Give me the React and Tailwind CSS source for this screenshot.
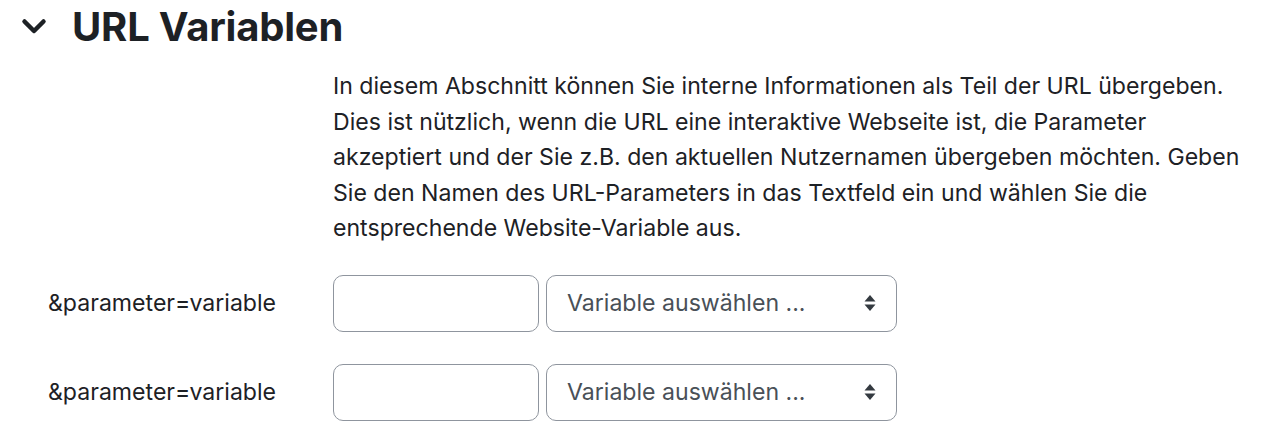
import React from 'react';

const rows = [1, 2];

const App = () => {
  return (
    <div className="min-h-screen bg-white text-[#1d2125] font-['Inter',sans-serif]">
      <div className="flex items-center h-[54px] pl-[21px]">
        <svg width="26" height="18" viewBox="0 0 26 18" className="mr-[25px]">
          <path d="M3.5 3.5 L13 13 L22.5 3.5" fill="none" stroke="#1d2125" strokeWidth="4.5" strokeLinecap="round" strokeLinejoin="round" />
        </svg>
        <h2 className="text-[40px] font-bold leading-none tracking-[-0.2px]">URL Variablen</h2>
      </div>

      <div className="pl-[333px] pt-[15px]">
        <p className="w-[925px] text-[23.1px] leading-[35.5px]">
          In diesem Abschnitt können Sie interne Informationen als Teil der URL übergeben. Dies ist nützlich, wenn die URL eine interaktive Webseite ist, die Parameter akzeptiert und der Sie z.B. den aktuellen Nutzernamen übergeben möchten. Geben Sie den Namen des URL-Parameters in das Textfeld ein und wählen Sie die entsprechende Website-Variable aus.
        </p>
      </div>

      <div className="pt-[28px] flex flex-col gap-[32px]">
        {rows.map((r) => (
          <div key={r} className="flex items-center">
            <label className="w-[333px] pl-[48px] text-[23.1px]">&amp;parameter=variable</label>
            <input
              type="text"
              className="w-[206px] h-[57px] border border-[#8f959e] rounded-[10px] px-3 outline-none"
            />
            <div className="ml-[7px] w-[351px] h-[57px] border border-[#8f959e] rounded-[10px] flex items-center justify-between pl-[20px] pr-[20px]">
              <span className="text-[23.1px] text-[#495057]">Variable auswählen ...</span>
              <svg width="12" height="18" viewBox="0 0 12 18">
                <path d="M6 1 L11.5 7.5 L0.5 7.5 Z" fill="#343a40" />
                <path d="M6 17 L11.5 10.5 L0.5 10.5 Z" fill="#343a40" />
              </svg>
            </div>
          </div>
        ))}
      </div>
    </div>
  );
};

export default App;
